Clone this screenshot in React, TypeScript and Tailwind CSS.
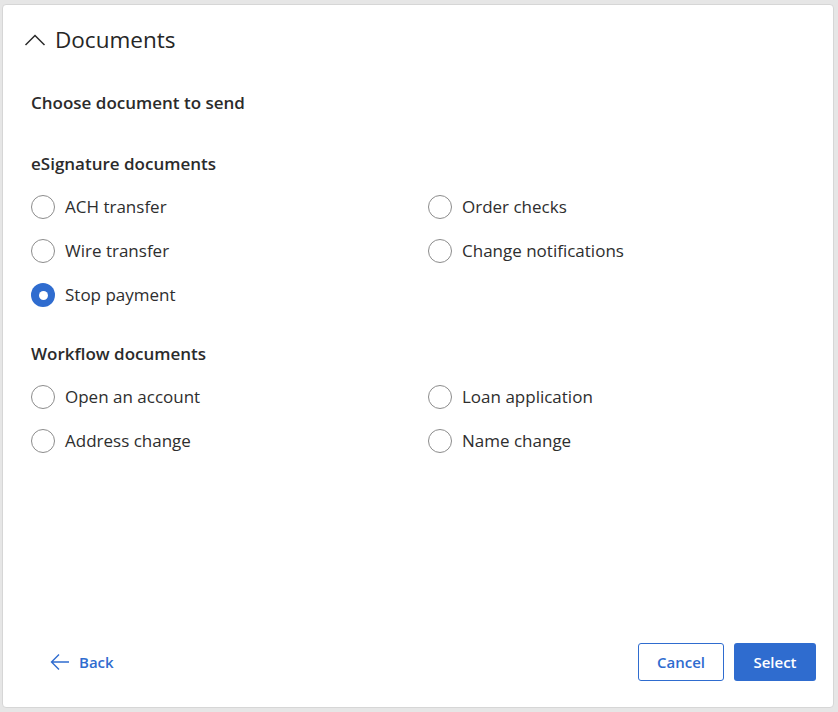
import React, { useState } from "react";

const font = { fontFamily: '"Open Sans", "Noto Sans", Arial, sans-serif' };

function Radio({ label, checked, onClick }: { label: string; checked?: boolean; onClick?: () => void }) {
  return (
    <div className="flex items-center h-[44px] gap-[10px] cursor-pointer" onClick={onClick}>
      {checked ? (
        <span className="w-[24px] h-[24px] rounded-full bg-[#2f6ccf] flex items-center justify-center">
          <span className="w-[9px] h-[9px] rounded-full bg-white" />
        </span>
      ) : (
        <span className="w-[24px] h-[24px] rounded-full border-[1.5px] border-[#8c8c8c] bg-white" />
      )}
      <span className="text-[17px] text-[#2e2e2e] leading-[24px]">{label}</span>
    </div>
  );
}

export default function App() {
  const [sel, setSel] = useState("Stop payment");
  const esign = [
    ["ACH transfer", "Order checks"],
    ["Wire transfer", "Change notifications"],
    ["Stop payment", ""],
  ];
  const workflow = [
    ["Open an account", "Loan application"],
    ["Address change", "Name change"],
  ];
  const renderRows = (rows: string[][]) => (
    <div className="grid grid-cols-[397px_1fr]">
      {rows.flat().map((l, i) =>
        l ? <Radio key={i} label={l} checked={sel === l} onClick={() => setSel(l)} /> : <div key={i} />
      )}
    </div>
  );
  return (
    <div className="w-[838px] h-[712px] bg-[#e6e6e6] pt-[4px] pl-[2px]" style={font}>
      <div className="w-[832px] h-[704px] bg-white border border-[#d6d6d6] rounded-[4px] flex flex-col">
        <div className="mt-[19px] h-[32px] flex items-center pl-[21px] gap-[9px]">
          <svg width="22" height="22" viewBox="0 0 22 22" fill="none">
            <path d="M1.5 16 L11 6.5 L20.5 16" stroke="#2b2b2b" strokeWidth="1.5" />
          </svg>
          <span className="text-[22.5px] font-medium text-[#262626] leading-[32px]">Documents</span>
        </div>
        <div className="px-[28px]">
          <div className="mt-[35px] text-[17px] font-semibold text-[#2b2b2b] leading-[24px]">Choose document to send</div>
          <div className="mt-[37px] text-[17px] font-semibold text-[#2b2b2b] leading-[24px]">eSignature documents</div>
          <div className="mt-[9px]">{renderRows(esign)}</div>
          <div className="mt-[25px] text-[17px] font-semibold text-[#2b2b2b] leading-[24px]">Workflow documents</div>
          <div className="mt-[9px]">{renderRows(workflow)}</div>
        </div>
        <div className="flex-1" />
        <div className="flex items-center justify-between pl-[47px] pr-[17px] pb-[26px]">
          <div className="flex items-center gap-[9px] text-[#2f6ccf]">
            <svg width="20" height="20" viewBox="0 0 20 20" fill="none">
              <path d="M19 10 H1.5 M9 2.5 L1.5 10 L9 17.5" stroke="#2f6ccf" strokeWidth="1.4" />
            </svg>
            <span className="text-[15px] font-semibold">Back</span>
          </div>
          <div className="flex items-center gap-[10px]">
            <button className="w-[86px] h-[38px] border border-[#2f6ccf] rounded-[3px] text-[15px] font-semibold text-[#2f6ccf] bg-white">
              Cancel
            </button>
            <button className="w-[82px] h-[38px] rounded-[3px] text-[15px] font-semibold text-white bg-[#2f6ccf]">
              Select
            </button>
          </div>
        </div>
      </div>
    </div>
  );
}
